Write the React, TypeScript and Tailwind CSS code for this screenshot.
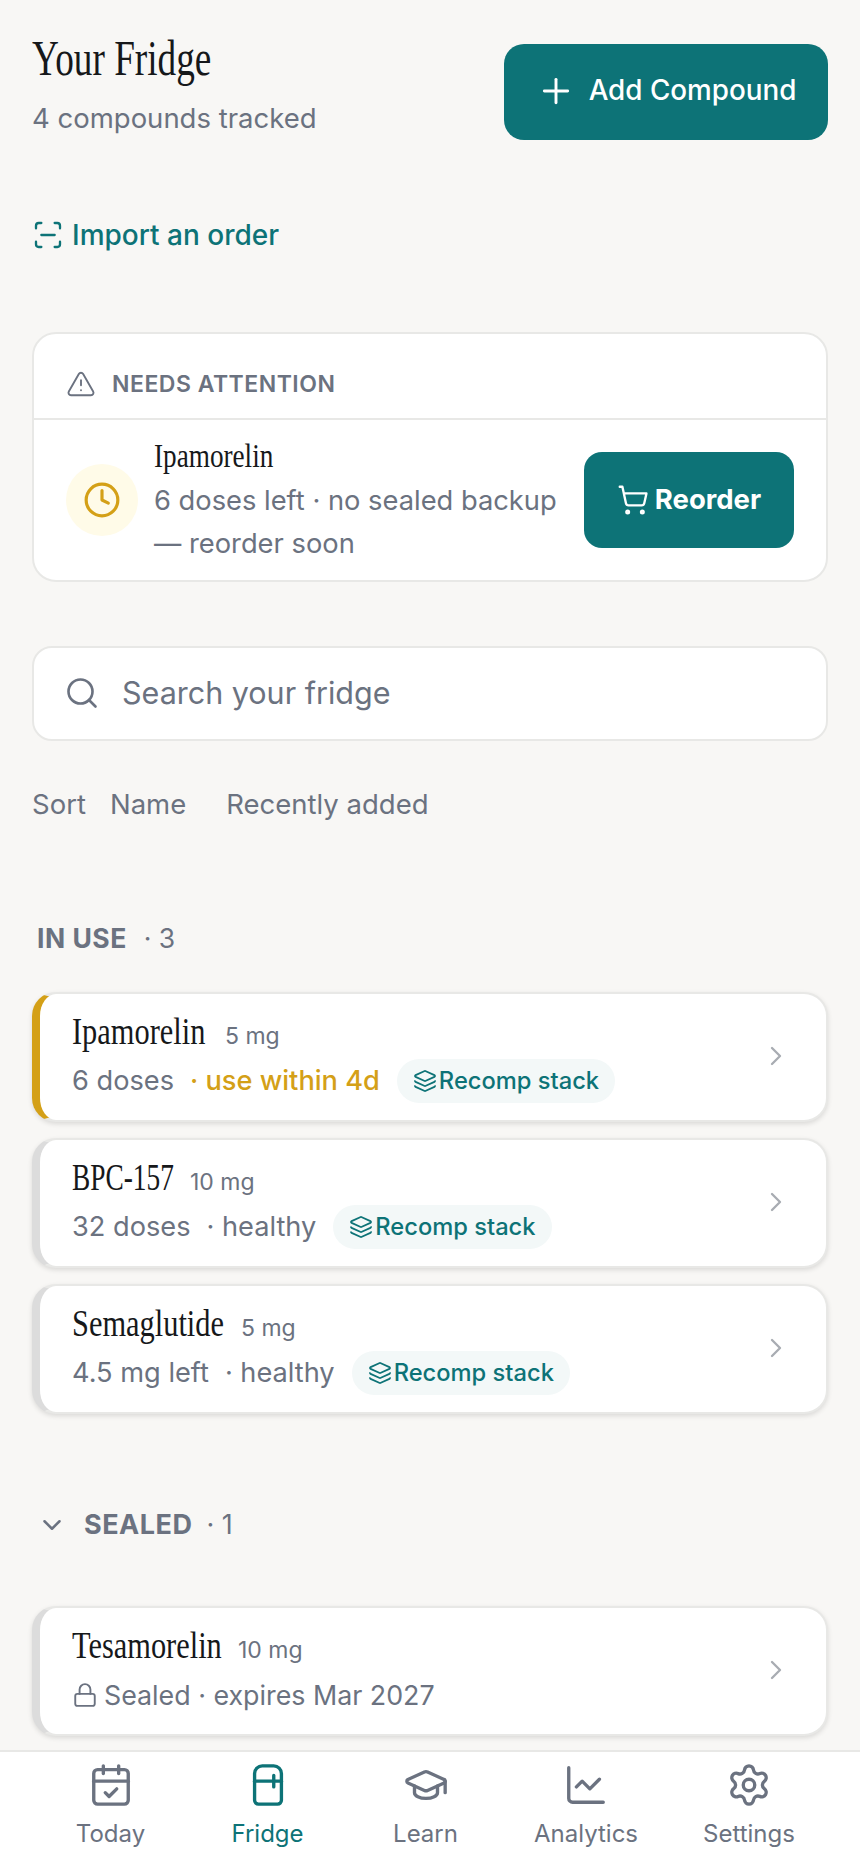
import {
  CalendarCheck,
  ChartLine,
  ChevronDown,
  ChevronRight,
  Clock,
  GraduationCap,
  Layers,
  Lock,
  Plus,
  Refrigerator,
  ScanLine,
  Search,
  Settings,
  ShoppingCart,
  TriangleAlert,
} from 'lucide-react'
import type { ReactNode } from 'react'

const serif = "font-['Liberation_Serif',serif] text-[#16181a] whitespace-nowrap origin-left inline-block"

function StackTag() {
  return (
    <span className="ml-[17px] inline-flex h-[44px] items-center gap-[2px] rounded-full bg-[#f3f8f8] px-[16px] text-[23.7px] font-medium text-[#0d7377]">
      <Layers size={24} strokeWidth={1.75} />
      Recomp stack
    </span>
  )
}

function CompoundCard({
  name,
  nameWidth,
  nameScale = 'scale-x-[.8]',
  dose,
  accent,
  rowText = 'text-[27.2px]',
  children,
}: {
  name: string
  nameWidth: string
  nameScale?: string
  dose: string
  accent?: boolean
  rowText?: string
  children: ReactNode
}) {
  return (
    <div
      className={`flex h-[130px] items-center justify-between rounded-[24px] border-2 border-l-[8px] border-[#e8e8e6] bg-white pb-[2px] pl-[32px] pr-[34px] shadow-[0_2px_5px_rgba(0,0,0,0.12)] ${
        accent ? 'border-l-[#d4a017]' : 'border-l-[#dcdcdc]'
      }`}
    >
      <div>
        <div className="flex h-[50px] items-center">
          <span className={`-mt-[6px] ${nameWidth}`}>
            <span className={`${serif} ${nameScale} text-[38px] leading-[44px]`}>{name}</span>
          </span>
          <span className="ml-[16px] mt-[4px] text-[23px] text-[#6b7280]">{dose}</span>
        </div>
        <div className={`flex h-[44px] items-center text-[#6b7280] ${rowText}`}>{children}</div>
      </div>
      <ChevronRight size={32} strokeWidth={1.75} className="text-[#a8acb2]" />
    </div>
  )
}

const navItems = [
  { label: 'Today', Icon: CalendarCheck },
  { label: 'Fridge', Icon: Refrigerator, active: true },
  { label: 'Learn', Icon: GraduationCap },
  { label: 'Analytics', Icon: ChartLine },
  { label: 'Settings', Icon: Settings },
]

export default function App() {
  return (
    <div className="flex h-[1864px] w-[860px] flex-col overflow-hidden bg-[#f8f7f5] font-[Inter,sans-serif]">
      <main className="flex-1 overflow-hidden px-[32px]">
        {/* Header */}
        <div className="flex items-start justify-between pt-[44px]">
          <div>
            <h1 className="-mt-[18px] h-[64px]">
              <span className={`${serif} scale-x-[.745] text-[50px] leading-[64px]`}>Your Fridge</span>
            </h1>
            <p className="mt-[8px] text-[27.5px] text-[#6b7280]">4 compounds tracked</p>
          </div>
          <button className="flex h-[96px] w-[324px] items-center justify-center gap-[13px] rounded-[20px] bg-[#0d7377] pb-[2px] text-[27.8px] font-medium text-white">
            <Plus size={40} strokeWidth={1.75} />
            Add Compound
          </button>
        </div>

        <div className="mt-[77px] flex h-[36px] items-center gap-[8px] text-[28px] font-medium text-[#0d7377]">
          <ScanLine size={32} strokeWidth={1.75} />
          Import an order
        </div>

        {/* Needs attention */}
        <div className="mt-[79px] rounded-[24px] border-2 border-[#e8e8e6] bg-white">
          <div className="flex h-[86px] items-center gap-[16px] border-b-2 border-[#e8e8e6] px-[32px] pt-[16px] text-[23px] font-semibold tracking-[0.5px] text-[#6b7280]">
            <TriangleAlert size={30} strokeWidth={1.5} />
            NEEDS ATTENTION
          </div>
          <div className="flex h-[160px] items-center px-[32px]">
            <div className="flex h-[72px] w-[72px] shrink-0 items-center justify-center rounded-full bg-[#fffbe8]">
              <Clock size={38} strokeWidth={2} className="text-[#d4a017]" />
            </div>
            <div className="ml-[16px] flex-1 pt-[4px]">
              <div className="-mt-[4px] h-[40px]">
                <span className={`${serif} scale-x-[.8] text-[34px] leading-[40px]`}>Ipamorelin</span>
              </div>
              <p className="mt-[3px] text-[27.3px] leading-[43px] text-[#6b7280]">
                6 doses left · no sealed backup
                <br />— reorder soon
              </p>
            </div>
            <button className="flex h-[96px] w-[210px] shrink-0 items-center justify-center gap-[6px] rounded-[18px] bg-[#0d7377] text-[27.5px] font-bold text-white">
              <ShoppingCart size={32} strokeWidth={1.75} />
              Reorder
            </button>
          </div>
        </div>

        {/* Search and sort */}
        <div className="mt-[64px] flex h-[95px] items-center gap-[22px] rounded-[20px] border-2 border-[#e8e8e6] bg-white px-[30px] pb-[2px] text-[30.5px] text-[#6b7280]">
          <Search size={36} strokeWidth={1.75} />
          Search your fridge
        </div>
        <div className="mt-[46px] flex h-[36px] items-center text-[27.5px] text-[#6b7280]">
          <span>Sort</span>
          <span className="ml-[24px]">Name</span>
          <span className="ml-[40px]">Recently added</span>
        </div>

        {/* In use */}
        <div className="mt-[98px] flex h-[36px] items-center px-[5px] text-[26.5px] text-[#6b7280]">
          <span className="font-bold tracking-[0.5px]">IN USE</span>
          <span className="ml-[17px]">· 3</span>
        </div>
        <div className="mt-[35px] flex flex-col gap-[16px]">
          <CompoundCard name="Ipamorelin" nameWidth="w-[137px]" dose="5 mg" accent>
            <span>6 doses</span>
            <span className="ml-[16px] font-medium text-[#d4a017]">· use within 4d</span>
            <StackTag />
          </CompoundCard>
          <CompoundCard name="BPC-157" nameWidth="w-[102px]" nameScale="scale-x-[.72]" dose="10 mg">
            <span>32 doses</span>
            <span className="ml-[16px]">· healthy</span>
            <StackTag />
          </CompoundCard>
          <CompoundCard name="Semaglutide" nameWidth="w-[153px]" dose="5 mg">
            <span>4.5 mg left</span>
            <span className="ml-[16px]">· healthy</span>
            <StackTag />
          </CompoundCard>
        </div>

        {/* Sealed */}
        <div className="mt-[93px] flex h-[36px] items-center pl-[5px] text-[27px] text-[#6b7280]">
          <ChevronDown size={30} strokeWidth={2} />
          <span className="ml-[17px] font-bold tracking-[0.5px]">SEALED</span>
          <span className="ml-[14px]">· 1</span>
        </div>
        <div className="mt-[63px]">
          <CompoundCard name="Tesamorelin" nameWidth="w-[150px]" dose="10 mg" rowText="text-[26.8px]">
            <Lock size={26} strokeWidth={1.75} className="mr-[6px]" />
            Sealed · expires Mar 2027
          </CompoundCard>
        </div>
      </main>

      {/* Bottom nav */}
      <nav className="grid h-[114px] shrink-0 grid-cols-[157px_157px_159px_162px_164px] items-start border-t-2 border-[#e8e8e6] bg-white px-[32px] pt-[10px]">
        {navItems.map(({ label, Icon, active }) => (
          <div
            key={label}
            className={`flex flex-col items-center gap-[8px] text-[24px] ${
              active ? 'text-[#0d7377]' : 'text-[#6b7280]'
            }`}
          >
            <Icon size={46} strokeWidth={1.75} />
            {label}
          </div>
        ))}
      </nav>
    </div>
  )
}
